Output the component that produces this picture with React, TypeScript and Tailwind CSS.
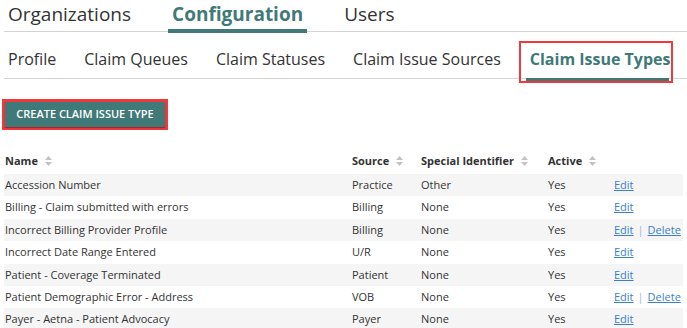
import React from "react";

const rows = [
  { name: "Accession Number", source: "Practice", special: "Other", active: "Yes", del: false },
  { name: "Billing - Claim submitted with errors", source: "Billing", special: "None", active: "Yes", del: false },
  { name: "Incorrect Billing Provider Profile", source: "Billing", special: "None", active: "Yes", del: true },
  { name: "Incorrect Date Range Entered", source: "U/R", special: "None", active: "Yes", del: false },
  { name: "Patient - Coverage Terminated", source: "Patient", special: "None", active: "Yes", del: false },
  { name: "Patient Demographic Error - Address", source: "VOB", special: "None", active: "Yes", del: true },
  { name: "Payer - Aetna - Patient Advocacy", source: "Payer", special: "None", active: "Yes", del: false },
];

function SortIcon() {
  return (
    <svg width="7" height="10" viewBox="0 0 7 10" className="ml-[7px] inline-block align-[-1px]">
      <path d="M3.5 0 L7 4 H0 Z" fill="#c3c3c3" />
      <path d="M3.5 10 L7 6 H0 Z" fill="#c3c3c3" />
    </svg>
  );
}

export default function App() {
  return (
    <div className="w-[687px] h-[328px] overflow-hidden bg-white text-[#333]" style={{ fontFamily: '"Open Sans", sans-serif' }}>
      {/* top tabs */}
      <div className="ml-[4px] flex h-[32px] gap-[33px] border-b border-[#d4d4d4]">
        <div className="px-[4px] text-[19px] leading-[28px] text-[#333]">Organizations</div>
        <div className="relative px-[4px] text-[19px] font-bold leading-[28px] text-[#3f7a78]">
          Configuration
          <div className="absolute left-0 right-0 bottom-[-2px] h-[4px] bg-[#3f7a78]" />
        </div>
        <div className="px-[4px] text-[19px] leading-[28px] text-[#333]">Users</div>
      </div>
      {/* sub tabs */}
      <div className="ml-[4px] mt-[11px] flex h-[36px] items-start gap-[20px] border-b border-[#d4d4d4] text-[16px]">
        <div className="px-[4px] leading-[32px]">Profile</div>
        <div className="px-[4px] leading-[32px]">Claim Queues</div>
        <div className="px-[4px] leading-[32px]">Claim Statuses</div>
        <div className="px-[4px] leading-[32px]">Claim Issue Sources</div>
        <div className="relative ml-[-6px] mt-[-2px] h-[42px] whitespace-nowrap border-2 border-[#f0383d] pl-[9px] pr-0">
          <div className="font-bold leading-[32px] text-[#3f7a78]">Claim Issue Types</div>
          <div className="absolute left-[5px] right-[2px] top-[35px] h-[3px] bg-[#3f7a78]" />
        </div>
      </div>
      {/* button */}
      <div className="ml-[2px] mt-[20px] inline-block border-[3px] border-[#f0383d]">
        <button className="block h-[25px] w-[160px] bg-[#3f7a78] text-[11px] font-semibold text-white shadow-[0_1px_1px_rgba(0,0,0,0.3)]">
          CREATE CLAIM ISSUE TYPE
        </button>
      </div>
      {/* table */}
      <table className="ml-[4px] mt-[18px] w-[679px] border-collapse text-[11px]">
        <thead>
          <tr className="h-[26px]">
            <th className="w-[348px] pl-[1px] text-left font-bold">Name<SortIcon /></th>
            <th className="w-[69px] text-left font-bold">Source<SortIcon /></th>
            <th className="w-[127px] text-left font-bold">Special Identifier<SortIcon /></th>
            <th className="w-[66px] text-left font-bold">Active<SortIcon /></th>
            <th />
          </tr>
        </thead>
        <tbody>
          {rows.map((r, i) => (
            <tr key={i} className={`h-[22.4px] ${i % 2 === 0 ? "bg-[#f5f5f5]" : "bg-white"}`}>
              <td className="pl-[1px]">{r.name}</td>
              <td>{r.source}</td>
              <td>{r.special}</td>
              <td>{r.active}</td>
              <td>
                <a className="text-[#3a7fcf] underline">Edit</a>
                {r.del && (
                  <>
                    <span className="mx-[4px] text-[#9cb8d8]">|</span>
                    <a className="text-[#3a7fcf] underline">Delete</a>
                  </>
                )}
              </td>
            </tr>
          ))}
        </tbody>
      </table>
    </div>
  );
}
